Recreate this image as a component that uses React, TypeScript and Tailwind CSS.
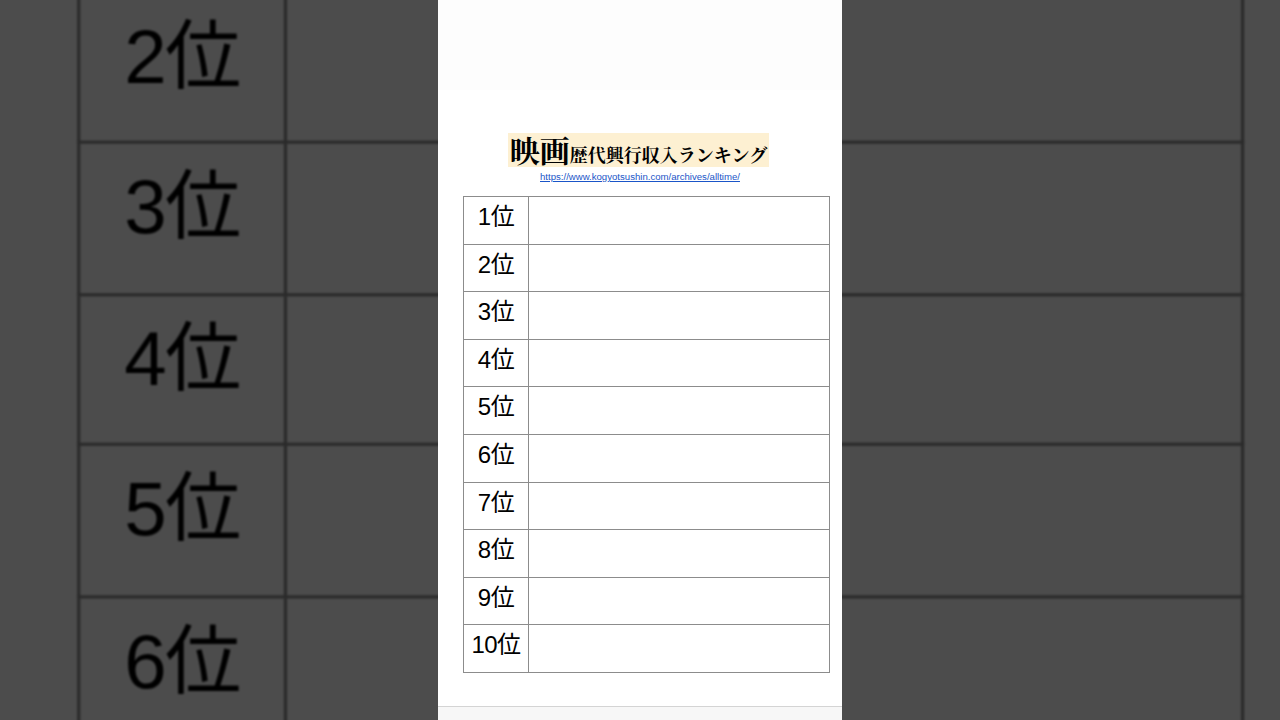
import React from "react";

const ranks = ["1位", "2位", "3位", "4位", "5位", "6位", "7位", "8位", "9位", "10位"];

function Panel() {
  return (
    <div className="flex h-[720px] w-[404px] flex-col bg-white">
      <div className="h-[90px] shrink-0 bg-[#fdfdfd]" />
      <div className="flex h-[616px] shrink-0 flex-col items-center pt-[43px]">
        <div
          className="mr-[3px] flex h-[34px] items-end bg-[#fdf0d2] px-[2px] pb-[2px] text-black"
          style={{ fontFamily: '"Noto Serif CJK JP", "Noto Sans CJK JP", serif' }}
        >
          <span className="text-[30px] font-bold leading-[31px]">映画</span>
          <span className="text-[18px] font-bold leading-[22px]">歴代興行収入ランキング</span>
        </div>
        <a
          className="mt-[4px] text-[9.6px] leading-[12px] text-[#1a55c8] underline"
          style={{ fontFamily: '"Liberation Sans", Arial, sans-serif' }}
        >
          https://www.kogyotsushin.com/archives/alltime/
        </a>
        <table className="mt-[13px] ml-[13px] w-[367px] border-collapse">
          <tbody>
            {ranks.map((r) => (
              <tr key={r} className="h-[47.6px]">
                <td
                  className="w-[65px] border border-[#8c8c8c] pt-[8px] text-center align-top text-[24px] leading-[24px] tracking-[-0.5px] text-black"
                  style={{ fontFamily: '"Liberation Sans", "Noto Sans CJK JP", sans-serif' }}
                >
                  {r}
                </td>
                <td className="border border-[#8c8c8c]" />
              </tr>
            ))}
          </tbody>
        </table>
      </div>
      <div className="flex-1 border-t border-[#d4d4d4] bg-[#f7f7f7]" />
    </div>
  );
}

export default function App() {
  return (
    <div className="relative h-[720px] w-[1280px] overflow-hidden bg-[#4c4c4c]">
      <div aria-hidden="true" className="absolute left-[438px] top-0 origin-center scale-[3.18] blur-[0.4px]">
        <Panel />
      </div>
      <div className="absolute inset-0 bg-black/70" />
      <div className="relative flex h-[720px] justify-center">
        <Panel />
      </div>
    </div>
  );
}
